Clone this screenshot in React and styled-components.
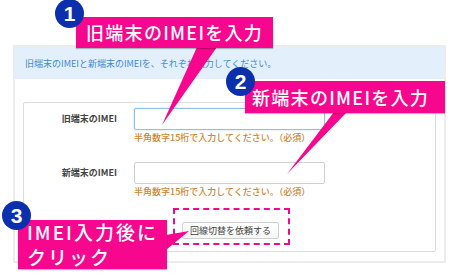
import React from 'react';
import styled, { createGlobalStyle } from 'styled-components';

const GlobalStyle = createGlobalStyle`
  body {
    margin: 0;
    background: #fff;
    font-family: "Noto Sans CJK JP", "Noto Sans", sans-serif;
  }
`;

const Page = styled.div`
  position: relative;
  width: 450px;
  height: 273px;
  padding: 45px 0 0 13px;
  box-sizing: border-box;
  overflow: hidden;
`;

const Panel = styled.div`
  width: 433px;
  height: 218px;
  border: 2px solid #ececec;
  box-sizing: border-box;
  display: flex;
  flex-direction: column;
`;

const InfoBar = styled.div`
  height: 32px;
  flex-shrink: 0;
  background: #e3f0fb;
  color: #3d8ad4;
  font-size: 9px;
  padding-left: 10px;
  display: flex;
  align-items: center;
`;

const Body = styled.div`
  flex: 1;
  padding: 23px 8px 9px 8px;
  display: flex;
`;

const FormBox = styled.div`
  flex: 1;
  border: 1px solid #dcdcdc;
  border-radius: 2px;
  padding-top: 5px;
  display: flex;
  flex-direction: column;
`;

const Field = styled.div`
  display: grid;
  grid-template-columns: 93px 191px;
  column-gap: 17px;
  margin-top: ${(p) => (p.$first ? '0' : '18px')};
`;

const Label = styled.div`
  font-size: 9px;
  font-weight: 700;
  color: #444;
  text-align: right;
  height: 22px;
  line-height: 22px;
`;

const Input = styled.div`
  height: 22px;
  box-sizing: border-box;
  border: 1px solid ${(p) => (p.$focused ? '#8cc2ee' : '#d0d0d0')};
  border-radius: 2px;
  background: #fff;
  box-shadow: ${(p) => (p.$focused ? '0 0 2px rgba(102, 175, 233, 0.5)' : 'none')};
`;

const Hint = styled.div`
  grid-column: 2;
  margin-top: 2px;
  width: 240px;
  font-size: 9px;
  font-weight: 500;
  line-height: 12px;
  color: #d3842a;
  white-space: nowrap;
`;

const Actions = styled.div`
  display: flex;
  justify-content: center;
  margin-top: 10px;
  padding-left: 4px;
`;

const DashedFrame = styled.div`
  border: 2px dashed #f4078f;
  padding: 5px 9px 4px 7px;
`;

const Button = styled.button`
  width: 97px;
  height: 17px;
  padding: 0;
  border: 1px solid #cfcfcf;
  border-radius: 2px;
  background: linear-gradient(#fff, #f6f6f6);
  font-family: inherit;
  font-size: 9px;
  color: #444;
  line-height: 15px;
`;

const Tails = styled.svg`
  position: absolute;
  left: 0;
  top: 0;
  pointer-events: none;
`;

const Callout = styled.div`
  position: absolute;
  left: ${(p) => p.$x}px;
  top: ${(p) => p.$y}px;
  width: ${(p) => p.$w}px;
  height: ${(p) => p.$h}px;
  box-sizing: border-box;
  padding-left: ${(p) => p.$pad}px;
  background: #f7068e;
  color: #fff;
  font-size: ${(p) => p.$size}px;
  font-weight: 500;
  letter-spacing: ${(p) => p.$ls}px;
  line-height: ${(p) => p.$lh}px;
  white-space: nowrap;
  box-shadow: 0 1px 1px rgba(0, 0, 0, 0.25);
`;

const Badge = styled.div`
  position: absolute;
  left: ${(p) => p.$x}px;
  top: ${(p) => p.$y}px;
  width: 29px;
  height: 29px;
  border-radius: 50%;
  background: #0c2fae;
  color: #fff;
  font-family: "Liberation Sans", Arial, sans-serif;
  font-size: 21px;
  font-weight: 700;
  display: flex;
  align-items: center;
  justify-content: center;
`;

const fields = [
  { label: '旧端末のIMEI', focused: true },
  { label: '新端末のIMEI', focused: false },
];

const tails = [
  '197,47 217,47 162,125',
  '334,112 347,112 287,174',
  '166,235 166,250 189,231',
];

export default function App() {
  return (
    <>
      <GlobalStyle />
      <Page>
        <Panel>
          <InfoBar>旧端末のIMEIと新端末のIMEIを、それぞれ入力してください。</InfoBar>
          <Body>
            <FormBox>
              {fields.map((f, i) => (
                <Field key={f.label} $first={i === 0}>
                  <Label>{f.label}</Label>
                  <Input $focused={f.focused} />
                  <Hint>半角数字15桁で入力してください。（必須）</Hint>
                </Field>
              ))}
              <Actions>
                <DashedFrame>
                  <Button>回線切替を依頼する</Button>
                </DashedFrame>
              </Actions>
            </FormBox>
          </Body>
        </Panel>

        <Tails width="450" height="273" viewBox="0 0 450 273">
          {tails.map((pts) => (
            <polygon key={pts} points={pts} fill="#f7068e" />
          ))}
        </Tails>

        <Callout $x={76} $y={17} $w={197} $h={31} $pad={10} $size={18} $ls={1.3} $lh={31}>
          旧端末のIMEIを入力
        </Callout>
        <Callout $x={245} $y={81} $w={200} $h={32} $pad={7} $size={18} $ls={1.3} $lh={32}>
          新端末のIMEIを入力
        </Callout>
        <Callout $x={18} $y={220} $w={149} $h={49} $pad={9} $size={19} $ls={2} $lh={24.5}>
          IMEI入力後に
          <br />
          クリック
        </Callout>

        <Badge $x={55} $y={-1}>1</Badge>
        <Badge $x={226} $y={67}>2</Badge>
        <Badge $x={2} $y={201}>3</Badge>
      </Page>
    </>
  );
}
